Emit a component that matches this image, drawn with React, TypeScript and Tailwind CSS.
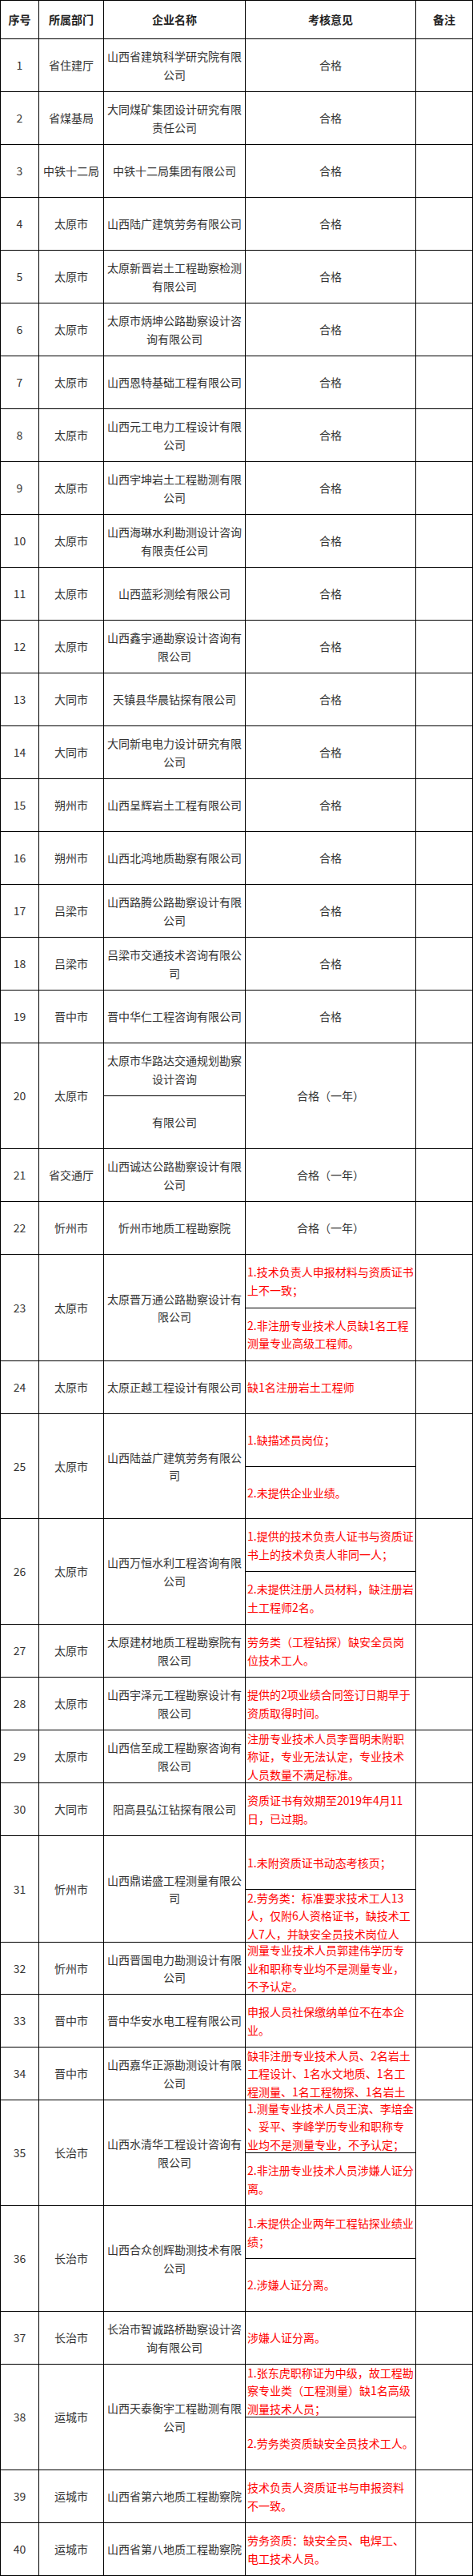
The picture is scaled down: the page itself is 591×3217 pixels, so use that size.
import React from "react";

type Row = {
  dept: string;
  co: string[];
  co2?: string[];
  ok?: string;
  red?: string[][];
  h?: string;
};

const ROWS: Row[] = [
  { dept: "省住建厅", co: ["山西省建筑科学研究院有限", "公司"], ok: "合格" },
  { dept: "省煤基局", co: ["大同煤矿集团设计研究有限", "责任公司"], ok: "合格" },
  { dept: "中铁十二局", co: ["中铁十二局集团有限公司"], ok: "合格" },
  { dept: "太原市", co: ["山西陆广建筑劳务有限公司"], ok: "合格" },
  { dept: "太原市", co: ["太原新晋岩土工程勘察检测", "有限公司"], ok: "合格" },
  { dept: "太原市", co: ["太原市炳坤公路勘察设计咨", "询有限公司"], ok: "合格" },
  { dept: "太原市", co: ["山西恩特基础工程有限公司"], ok: "合格" },
  { dept: "太原市", co: ["山西元工电力工程设计有限", "公司"], ok: "合格" },
  { dept: "太原市", co: ["山西宇坤岩土工程勘测有限", "公司"], ok: "合格" },
  { dept: "太原市", co: ["山西海琳水利勘测设计咨询", "有限责任公司"], ok: "合格" },
  { dept: "太原市", co: ["山西蓝彩测绘有限公司"], ok: "合格" },
  { dept: "太原市", co: ["山西鑫宇通勘察设计咨询有", "限公司"], ok: "合格" },
  { dept: "大同市", co: ["天镇县华晨钻探有限公司"], ok: "合格" },
  { dept: "大同市", co: ["大同新电电力设计研究有限", "公司"], ok: "合格" },
  { dept: "朔州市", co: ["山西呈辉岩土工程有限公司"], ok: "合格" },
  { dept: "朔州市", co: ["山西北鸿地质勘察有限公司"], ok: "合格" },
  { dept: "吕梁市", co: ["山西路腾公路勘察设计有限", "公司"], ok: "合格" },
  { dept: "吕梁市", co: ["吕梁市交通技术咨询有限公", "司"], ok: "合格" },
  { dept: "晋中市", co: ["晋中华仁工程咨询有限公司"], ok: "合格" },
  { dept: "太原市", co: ["太原市华路达交通规划勘察", "设计咨询"], co2: ["有限公司"], ok: "合格（一年）", h: "h-[132px]" },
  { dept: "省交通厅", co: ["山西诚达公路勘察设计有限", "公司"], ok: "合格（一年）" },
  { dept: "忻州市", co: ["忻州市地质工程勘察院"], ok: "合格（一年）" },
  {
    dept: "太原市", co: ["太原晋万通公路勘察设计有", "限公司"], h: "h-[133px]",
    red: [["1.技术负责人申报材料与资质证书", "上不一致；"], ["2.非注册专业技术人员缺1名工程", "测量专业高级工程师。"]],
  },
  { dept: "太原市", co: ["太原正越工程设计有限公司"], red: [["缺1名注册岩土工程师"]] },
  {
    dept: "太原市", co: ["山西陆益广建筑劳务有限公", "司"], h: "h-[131px]",
    red: [["1.缺描述员岗位；"], ["2.未提供企业业绩。"]],
  },
  {
    dept: "太原市", co: ["山西万恒水利工程咨询有限", "公司"], h: "h-[132px]",
    red: [["1.提供的技术负责人证书与资质证", "书上的技术负责人非同一人；"], ["2.未提供注册人员材料，缺注册岩", "土工程师2名。"]],
  },
  { dept: "太原市", co: ["太原建材地质工程勘察院有", "限公司"], red: [["劳务类（工程钻探）缺安全员岗", "位技术工人。"]] },
  { dept: "太原市", co: ["山西宇泽元工程勘察设计有", "限公司"], red: [["提供的2项业绩合同签订日期早于", "资质取得时间。"]] },
  {
    dept: "太原市", co: ["山西信至成工程勘察咨询有", "限公司"],
    red: [["注册专业技术人员李晋明未附职", "称证，专业无法认定，专业技术", "人员数量不满足标准。"]],
  },
  { dept: "大同市", co: ["阳高县弘江钻探有限公司"], red: [["资质证书有效期至2019年4月11", "日，已过期。"]] },
  {
    dept: "忻州市", co: ["山西鼎诺盛工程测量有限公", "司"], h: "h-[133px]",
    red: [["1.未附资质证书动态考核页；"], ["2.劳务类：标准要求技术工人13", "人，仅附6人资格证书，缺技术工", "人7人，并缺安全员技术岗位人"]],
  },
  {
    dept: "忻州市", co: ["山西晋国电力勘测设计有限", "公司"], h: "h-[65px]",
    red: [["测量专业技术人员郭建伟学历专", "业和职称专业均不是测量专业，", "不予认定。"]],
  },
  { dept: "晋中市", co: ["晋中华安水电工程有限公司"], red: [["申报人员社保缴纳单位不在本企", "业。"]] },
  {
    dept: "晋中市", co: ["山西嘉华正源勘测设计有限", "公司"],
    red: [["缺非注册专业技术人员、2名岩土", "工程设计、1名水文地质、1名工", "程测量、1名工程物探、1名岩土"]],
  },
  {
    dept: "长治市", co: ["山西水清华工程设计咨询有", "限公司"], h: "h-[132px]",
    red: [["1.测量专业技术人员王滨、李培金", "、妥平、李峰学历专业和职称专", "业均不是测量专业，不予认定；"], ["2.非注册专业技术人员涉嫌人证分", "离。"]],
  },
  {
    dept: "长治市", co: ["山西合众创辉勘测技术有限", "公司"], h: "h-[132px]",
    red: [["1.未提供企业两年工程钻探业绩业", "绩；"], ["2.涉嫌人证分离。"]],
  },
  { dept: "长治市", co: ["长治市智诚路桥勘察设计咨", "询有限公司"], red: [["涉嫌人证分离。"]] },
  {
    dept: "运城市", co: ["山西天泰衡宇工程勘测有限", "公司"], h: "h-[132px]",
    red: [["1.张东虎职称证为中级，故工程勘", "察专业类（工程测量）缺1名高级", "测量技术人员；"], ["2.劳务类资质缺安全员技术工人。"]],
  },
  { dept: "运城市", co: ["山西省第六地质工程勘察院"], red: [["技术负责人资质证书与申报资料", "不一致。"]] },
  { dept: "运城市", co: ["山西省第八地质工程勘察院"], red: [["劳务资质：缺安全员、电焊工、", "电工技术人员。"]] },
];

const CELL = "flex items-center justify-center border-r border-b border-black text-center";

function Lines({ lines }: { lines: string[] }) {
  return (
    <div className="flex flex-col">
      {lines.map((l, i) => (
        <span key={i} className="whitespace-nowrap">{l}</span>
      ))}
    </div>
  );
}

export default function App() {
  return (
    <div
      className="w-[591px] bg-white text-[14px] leading-[22.5px] text-[#333]"
      style={{ fontFamily: '"Microsoft YaHei", "Noto Sans CJK SC", "Noto Sans", sans-serif' }}
    >
      <div className="border-t border-l border-black">
        {/* header */}
        <div className="flex h-[48px] font-bold text-[#222]">
          <div className={`${CELL} w-[48px]`}>序号</div>
          <div className={`${CELL} w-[81px]`}>所属部门</div>
          <div className={`${CELL} w-[177px]`}>企业名称</div>
          <div className={`${CELL} w-[213px]`}>考核意见</div>
          <div className={`${CELL} flex-1`}>备注</div>
        </div>

        {ROWS.map((r, i) => (
          <div key={i} className={`flex ${r.h ?? "h-[66px]"}`}>
            <div className={`${CELL} w-[48px]`}>{i + 1}</div>
            <div className={`${CELL} w-[81px]`}>{r.dept}</div>

            {r.co2 ? (
              <div className="flex w-[177px] flex-col border-r border-b border-black">
                <div className="flex flex-1 items-center justify-center border-b border-black text-center">
                  <Lines lines={r.co} />
                </div>
                <div className="flex flex-1 items-center justify-center text-center">
                  <Lines lines={r.co2} />
                </div>
              </div>
            ) : (
              <div className={`${CELL} w-[177px]`}>
                <Lines lines={r.co} />
              </div>
            )}

            {r.red ? (
              <div className="flex w-[213px] flex-col border-r border-b border-black text-[#f00]">
                {r.red.map((sub, j) => (
                  <div
                    key={j}
                    className={`flex flex-1 flex-col justify-center overflow-hidden pl-[2px] ${
                      j < r.red!.length - 1 ? "border-b border-black" : ""
                    }`}
                  >
                    {sub.map((l, k) => (
                      <span key={k} className="whitespace-nowrap">{l}</span>
                    ))}
                  </div>
                ))}
              </div>
            ) : (
              <div className={`${CELL} w-[213px]`}>{r.ok}</div>
            )}

            <div className={`${CELL} flex-1`} />
          </div>
        ))}
      </div>
    </div>
  );
}
